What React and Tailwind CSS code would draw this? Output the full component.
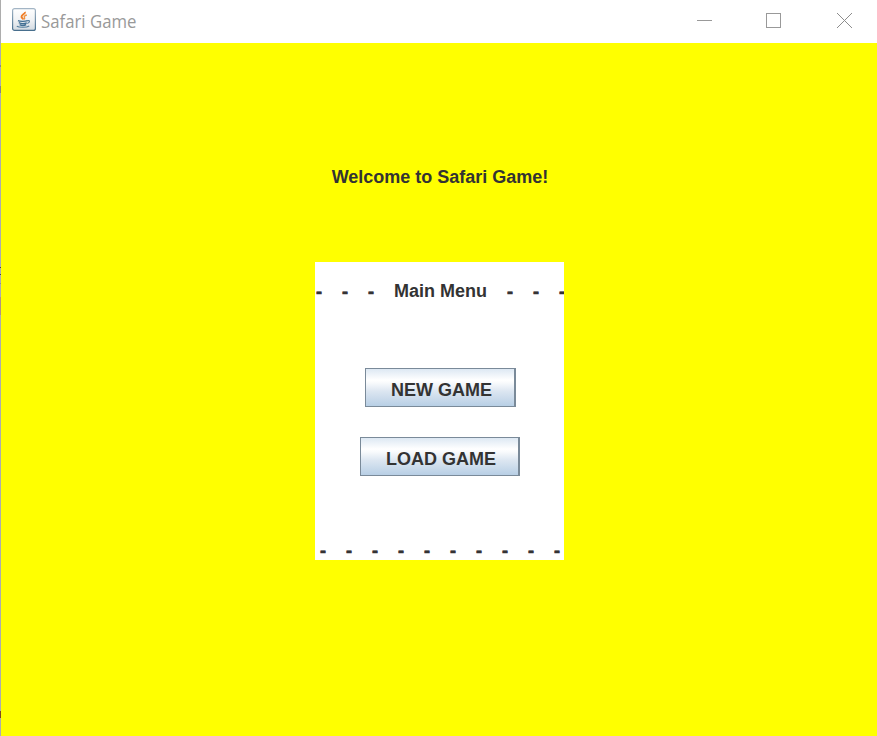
import React from "react";

function JavaIcon() {
  return (
    <svg width="24" height="24" viewBox="0 0 24 24" className="shrink-0" fill="none">
      <defs>
        <linearGradient id="tile" x1="0" y1="0" x2="0" y2="1">
          <stop offset="0" stopColor="#ffffff" />
          <stop offset="0.5" stopColor="#f1f3f5" />
          <stop offset="1" stopColor="#d3dae1" />
        </linearGradient>
        <linearGradient id="edge" x1="0" y1="0" x2="0" y2="1">
          <stop offset="0" stopColor="#a3b5c5" />
          <stop offset="1" stopColor="#486f8d" />
        </linearGradient>
      </defs>
      <rect x="0.6" y="0.6" width="22.8" height="21.8" rx="2" fill="url(#tile)" stroke="url(#edge)" strokeWidth="1.2" />
      <path d="M13 3.8c.8 2-3.8 2.9-3.5 5.1.1 1 1.500 1.600 1.900 2.600" stroke="#ef7d27" strokeWidth="1.9" />
      <path d="M14.8 7c-2.200.7-3 1.500-2.400 2.400.5.7.3 1.300-.2 2" stroke="#f0903f" strokeWidth="1.4" />
      <path d="M6 12.600c1.800 1 7 .9 9.700.1M6.800 14.700c2 .9 6 .9 8 .1M7.600 16.700c1.600.8 5 .8 6.600 0" stroke="#426f93" strokeWidth="1.4" />
      <path d="M15.300 12.600c2.700-.7 3 1.800 0 2.900M4.800 18.200c2.600 1.500 9.800 1.400 12.400-.3" stroke="#557e9e" strokeWidth="1.2" />
    </svg>
  );
}

function TitleBar() {
  return (
    <header className="flex h-[43px] shrink-0 bg-white pl-[11px] pt-2">
      <JavaIcon />
      <h1 className="ml-[5px] mt-px grow font-['Open_Sans','Noto_Sans',sans-serif] text-[18px] leading-6 text-[#999999]">
        <span className="inline-block origin-left scale-x-[0.932] whitespace-nowrap">Safari Game</span>
      </h1>
      <div className="mr-[25px] mt-[5px] flex h-[15px] shrink-0 items-center">
        <button aria-label="Minimize" className="h-px w-[15px] bg-[#999999]" />
        <button aria-label="Maximize" className="ml-[54px] size-[15px] border border-[#999999]" />
        <button aria-label="Close" className="ml-14 size-[15px]">
          <svg width="15" height="15" viewBox="0 0 15 15" stroke="#8c8c8c" strokeWidth="1">
            <path d="M0 0 15 15M15 0 0 15" />
          </svg>
        </button>
      </div>
    </header>
  );
}

function MenuButton({ children, className }) {
  return (
    <button
      className={
        "h-[39px] border border-r-2 border-[#7a8a99] bg-linear-[180deg,#dde8f3_0%,#ffffff_30%,#f8fafc_38%,#dce6f1_60%,#b8cfe5_100%] pt-1 pl-[25px] text-left whitespace-nowrap " +
        className
      }
    >
      {children}
    </button>
  );
}

function Dashes({ children }) {
  return <span className="align-[-1px] leading-4 [-webkit-text-stroke:0.7px_#333333]">{children}</span>;
}

function DesktopEdge() {
  return (
    <div className="flex w-px shrink-0 flex-col bg-[#adadad]">
      <div className="mt-[65px] h-[2px] bg-[#888888]" />
      <div className="mt-[19px] h-[7px] bg-[#858585]" />
      <div className="mt-[174px] h-px bg-[#444444]" />
      <div className="mt-[6px] h-px bg-[#444444]" />
      <div className="mt-[8px] h-px bg-[#909090]" />
      <div className="mt-[13px] h-[18px] bg-[#b19382]" />
      <div className="mt-[396px] h-[7px] bg-[#7d4724]" />
    </div>
  );
}

export default function App() {
  return (
    <div className="flex h-[736px] w-[877px] overflow-hidden font-['Liberation_Sans',Arial,sans-serif]">
      <DesktopEdge />
      <div className="flex min-w-0 grow flex-col">
        <TitleBar />
        <main className="flex grow flex-col items-center bg-[#ffff00] pl-[2px] text-[18px] leading-5 font-bold text-[#333333]">
          <h2 className="mt-[124px] whitespace-nowrap">Welcome to Safari Game!</h2>
          <section className="mt-[75px] mr-px flex h-[298px] w-[249px] flex-col overflow-hidden bg-white">
            <p className="mt-[19px] ml-px h-5 whitespace-pre">
              <Dashes>{"-    -    -    "}</Dashes>
              Main Menu
              <Dashes>{"    -    -    -"}</Dashes>
            </p>
            <MenuButton className="mt-[67px] ml-[50px] w-[151px]">NEW GAME</MenuButton>
            <MenuButton className="mt-[30px] ml-[45px] w-[160px]">LOAD GAME</MenuButton>
            <p className="mt-16 ml-[5px] h-5 whitespace-pre">
              <Dashes>{"-    -    -    -    -    -    -    -    -    -"}</Dashes>
            </p>
          </section>
        </main>
      </div>
    </div>
  );
}
